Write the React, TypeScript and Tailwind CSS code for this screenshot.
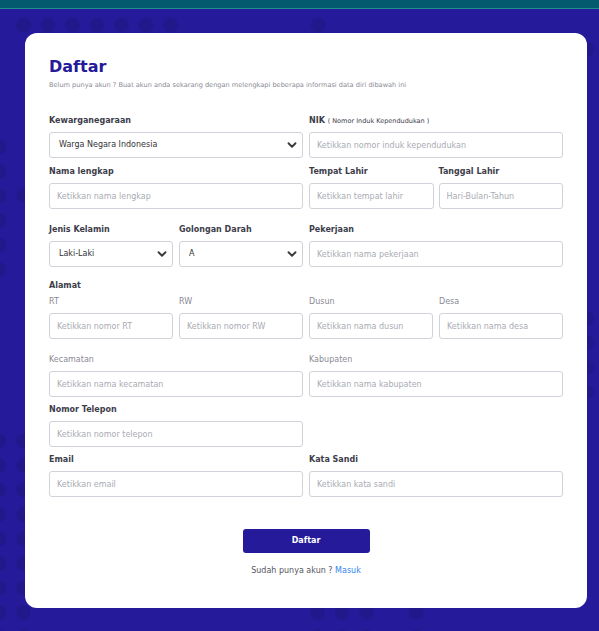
import { ChevronDown } from "lucide-react";

// dotted background clusters: [left, top, width, height]
const dotBlocks: string[] = [
  "left-[10px] top-[12px] w-[175px] h-[25px]",
  "left-[305px] top-[12px] w-[25px] h-[25px]",
  "left-[575px] top-[38px] w-[24px] h-[25px]",
  "left-0 top-[130px] w-[12px] h-[148px]",
  "left-[12px] top-[181px] w-[24px] h-[24px]",
  "left-0 top-[425px] w-[36px] h-[206px]",
  "left-[575px] top-[302px] w-[24px] h-[98px]",
  "left-[305px] top-[600px] w-[74px] h-[31px]",
  "left-[403px] top-[600px] w-[25px] h-[31px]",
];

const Label = ({ children }: { children: React.ReactNode }) => (
  <p className="text-[8px] leading-[12px] font-bold text-[#3d3d4a] mb-[5px]">{children}</p>
);

const SubLabel = ({ children }: { children: React.ReactNode }) => (
  <p className="text-[8px] leading-[12px] text-[#8a8a94] mb-[5px]">{children}</p>
);

const Input = ({ placeholder }: { placeholder: string }) => (
  <input
    placeholder={placeholder}
    className="block w-full h-[26px] border border-[#cfd2d8] rounded-[3px] px-[7px] text-[8px] text-[#333] placeholder:text-[#a9abb3] outline-none bg-white"
  />
);

const Select = ({ value }: { value: string }) => (
  <div className="w-full h-[26px] border border-[#cfd2d8] rounded-[3px] pl-[9px] pr-[3px] flex items-center justify-between bg-white">
    <span className="text-[8px] text-[#333]">{value}</span>
    <ChevronDown size={14} strokeWidth={3.2} className="text-[#3a3a3a]" />
  </div>
);

export default function App() {
  return (
    <div className="min-h-screen bg-[#251a9a] font-['DejaVu_Sans',sans-serif] relative overflow-hidden">
      <div className="h-[9px] bg-[#035a6e] border-b border-[#1f8c8e]" />
      {dotBlocks.map((c, i) => (
        <div
          key={i}
          className={`absolute ${c} bg-fixed bg-[radial-gradient(circle,#21188c_7px,transparent_7.6px)] bg-[length:24.5px_24.5px] bg-[position:11.25px_12.25px]`}
        />
      ))}

      <div className="relative z-10 ml-[25px] mt-[24px] w-[562px] h-[575px] bg-white rounded-[12px] px-[24px] pt-[24px]">
        <h1 className="text-[16px] leading-[20px] font-extrabold text-[#241a9a]">Daftar</h1>
        <p className="text-[6.6px] leading-[10px] text-[#8a8a94] mt-[3px]">
          Belum punya akun ? Buat akun anda sekarang dengan melengkapi beberapa informasi data diri dibawah ini
        </p>

        <div className="grid grid-cols-2 gap-x-[6px] mt-[25px]">
          <div>
            <Label>Kewarganegaraan</Label>
            <Select value="Warga Negara Indonesia" />
          </div>
          <div>
            <Label>
              NIK <span className="font-normal text-[6.5px]">( Nomor Induk Kependudukan )</span>
            </Label>
            <Input placeholder="Ketikkan nomor induk kependudukan" />
          </div>
        </div>

        <div className="grid grid-cols-2 gap-x-[6px] mt-[8px]">
          <div>
            <Label>Nama lengkap</Label>
            <Input placeholder="Ketikkan nama lengkap" />
          </div>
          <div className="grid grid-cols-2 gap-x-[5px]">
            <div>
              <Label>Tempat Lahir</Label>
              <Input placeholder="Ketikkan tempat lahir" />
            </div>
            <div>
              <Label>Tanggal Lahir</Label>
              <Input placeholder="Hari-Bulan-Tahun" />
            </div>
          </div>
        </div>

        <div className="grid grid-cols-2 gap-x-[6px] mt-[15px]">
          <div className="grid grid-cols-2 gap-x-[6px]">
            <div>
              <Label>Jenis Kelamin</Label>
              <Select value="Laki-Laki" />
            </div>
            <div>
              <Label>Golongan Darah</Label>
              <Select value="A" />
            </div>
          </div>
          <div>
            <Label>Pekerjaan</Label>
            <Input placeholder="Ketikkan nama pekerjaan" />
          </div>
        </div>

        <p className="text-[8px] leading-[12px] font-bold text-[#3d3d4a] mt-[13px] mb-[4px]">Alamat</p>
        <div className="grid grid-cols-4 gap-x-[6px]">
          <div>
            <SubLabel>RT</SubLabel>
            <Input placeholder="Ketikkan nomor RT" />
          </div>
          <div>
            <SubLabel>RW</SubLabel>
            <Input placeholder="Ketikkan nomor RW" />
          </div>
          <div>
            <SubLabel>Dusun</SubLabel>
            <Input placeholder="Ketikkan nama dusun" />
          </div>
          <div>
            <SubLabel>Desa</SubLabel>
            <Input placeholder="Ketikkan nama desa" />
          </div>
        </div>

        <div className="grid grid-cols-2 gap-x-[6px] mt-[15px]">
          <div>
            <SubLabel>Kecamatan</SubLabel>
            <Input placeholder="Ketikkan nama kecamatan" />
          </div>
          <div>
            <SubLabel>Kabupaten</SubLabel>
            <Input placeholder="Ketikkan nama kabupaten" />
          </div>
        </div>

        <div className="grid grid-cols-2 gap-x-[6px] mt-[7px]">
          <div>
            <Label>Nomor Telepon</Label>
            <Input placeholder="Ketikkan nomor telepon" />
          </div>
        </div>

        <div className="grid grid-cols-2 gap-x-[6px] mt-[7px]">
          <div>
            <Label>Email</Label>
            <Input placeholder="Ketikkan email" />
          </div>
          <div>
            <Label>Kata Sandi</Label>
            <Input placeholder="Ketikkan kata sandi" />
          </div>
        </div>

        <button className="block mx-auto mt-[32px] w-[127px] h-[24px] bg-[#241a9a] rounded-[3px] text-white text-[8px] font-bold">
          Daftar
        </button>
        <p className="text-center text-[8px] leading-[12px] text-[#555560] mt-[12px]">
          Sudah punya akun ? <span className="text-[#2f86f0]">Masuk</span>
        </p>
      </div>
    </div>
  );
}
